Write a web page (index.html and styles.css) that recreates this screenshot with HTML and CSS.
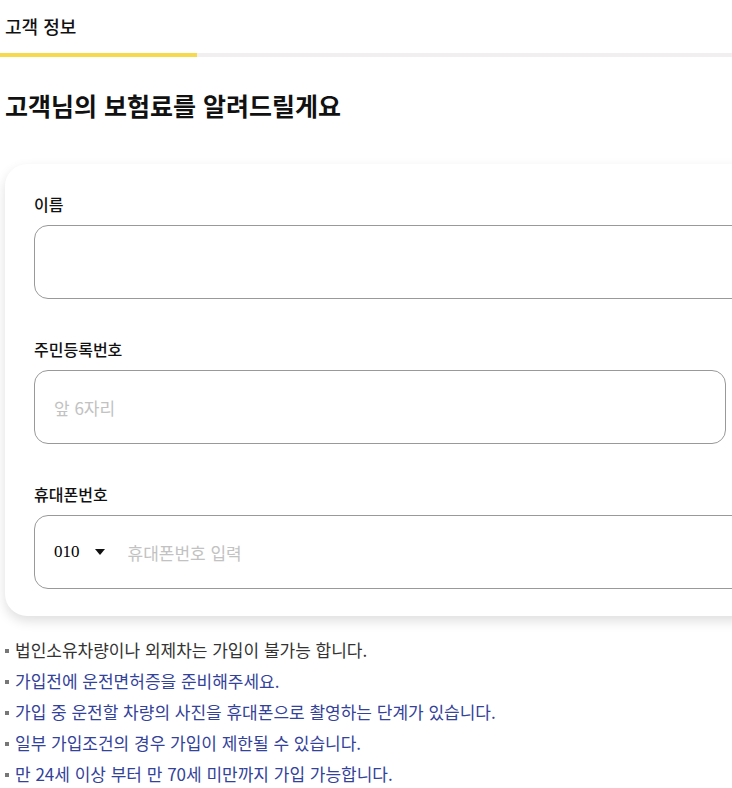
FILE: index.html
```html
<!DOCTYPE html>
<html lang="ko">
<head>
<meta charset="utf-8">
<link rel="stylesheet" href="styles.css">
</head>
<body>
<div class="page">
  <header class="topbar">고객 정보</header>
  <div class="progress"><div class="progress-fill"></div></div>
  <h1 class="title">고객님의 보험료를 알려드릴게요</h1>
  <section class="card">
    <div class="field">
      <div class="label">이름</div>
      <div class="input"></div>
    </div>
    <div class="field">
      <div class="label">주민등록번호</div>
      <div class="input narrow"><span class="ph">앞 6자리</span></div>
    </div>
    <div class="field">
      <div class="label">휴대폰번호</div>
      <div class="input">
        <span class="sel">010</span>
        <span class="caret"></span>
        <span class="ph">휴대폰번호 입력</span>
      </div>
    </div>
  </section>
  <ul class="notes">
    <li class="dark">법인소유차량이나 외제차는 가입이 불가능 합니다.</li>
    <li>가입전에 운전면허증을 준비해주세요.</li>
    <li>가입 중 운전할 차량의 사진을 휴대폰으로 촬영하는 단계가 있습니다.</li>
    <li>일부 가입조건의 경우 가입이 제한될 수 있습니다.</li>
    <li>만 24세 이상 부터 만 70세 미만까지 가입 가능합니다.</li>
  </ul>
</div>
</body>
</html>
```
FILE: styles.css
```css
html, body {
  margin: 0;
  padding: 0;
  overflow: hidden;
  background: #fff;
}
body {
  font-family: "Noto Sans CJK KR", "Noto Sans", sans-serif;
  color: #111;
}
.page {
  width: 800px;
}
.topbar {
  height: 53px;
  line-height: 53px;
  padding-left: 5px;
  font-size: 18px;
  font-weight: 500;
  color: #111;
}
.progress {
  height: 4px;
  background: #f1eff0;
}
.progress-fill {
  width: 197px;
  height: 100%;
  background: #f7d94c;
}
.title {
  margin: 30px 0 0 5px;
  font-size: 25px;
  font-weight: 700;
  line-height: 36px;
  color: #111;
}
.card {
  margin: 41px 0 0 5px;
  width: 780px;
  box-sizing: border-box;
  padding: 27px 29px 27px 29px;
  border-radius: 22px;
  background: #fff;
  box-shadow: 0 5px 12px rgba(0, 0, 0, 0.13);
  display: flex;
  flex-direction: column;
  gap: 37px;
}
.field {
  display: flex;
  flex-direction: column;
  gap: 10px;
}
.label {
  font-size: 16px;
  font-weight: 500;
  line-height: 24px;
  padding-top: 1px;
  margin-bottom: -1px;
}
.input {
  height: 72px;
  border: 1px solid #999;
  border-radius: 14px;
  display: flex;
  align-items: center;
  padding-left: 19px;
  font-size: 17px;
}
.input.narrow {
  width: 671px;
}
.ph {
  color: #c2c2c2;
}
.sel {
  font-family: "Liberation Serif", serif;
  font-size: 17px;
  color: #000;
}
.caret {
  width: 0;
  height: 0;
  border-left: 5px solid transparent;
  border-right: 5px solid transparent;
  border-top: 6px solid #111;
  margin: 0 23px 0 15px;
}
.notes {
  list-style: none;
  margin: 18px 0 0 5px;
  padding: 0;
  font-size: 17px;
  color: #33429a;
}
.notes li {
  line-height: 31px;
  display: flex;
  align-items: center;
}
.notes li::before {
  content: "";
  width: 4px;
  height: 4px;
  background: #777;
  margin-right: 6px;
  margin-top: 2px;
}
.notes li.dark {
  color: #333;
}
```
